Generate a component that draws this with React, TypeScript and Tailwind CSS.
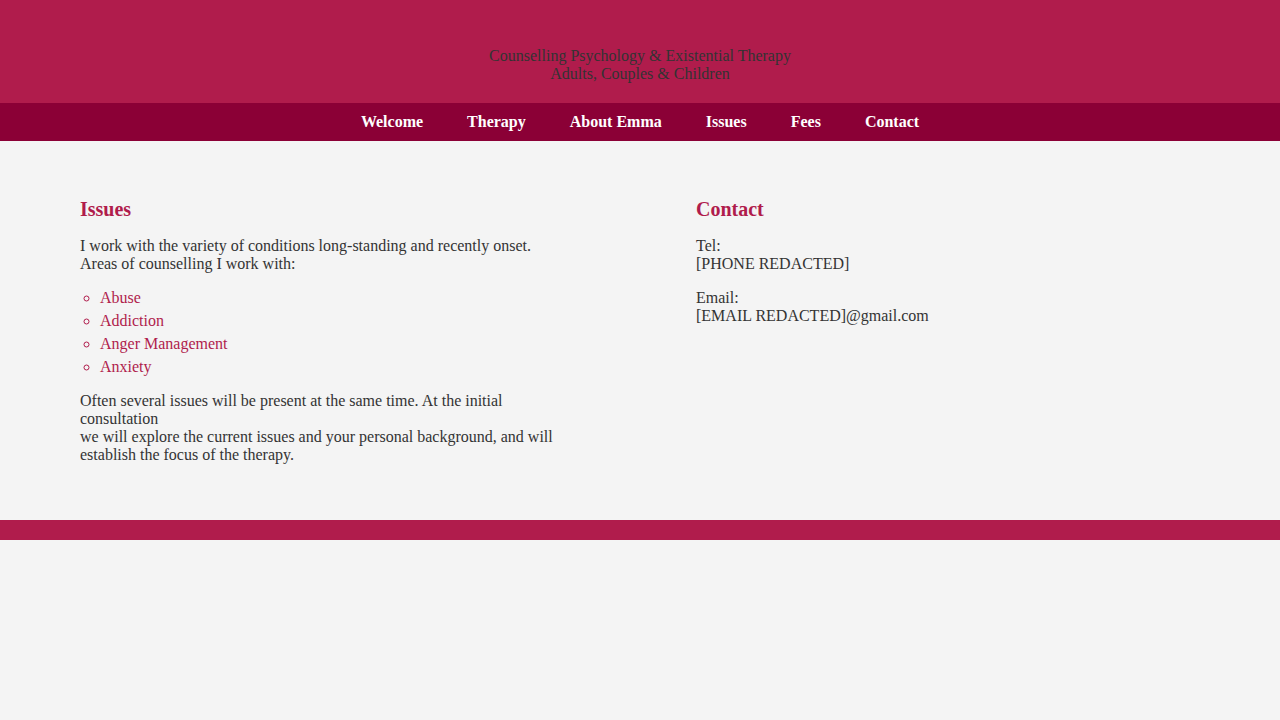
export default function App() {
  const navItems = ["Welcome", "Therapy", "About Emma", "Issues", "Fees", "Contact"];
  const issues = ["Abuse", "Addiction", "Anger Management", "Anxiety"];

  return (
    <div className="min-h-screen bg-[#f4f4f4] text-[#333333] font-['Liberation_Serif','Times_New_Roman',serif] text-[16px] leading-[18px]">
      {/* Header */}
      <header className="bg-[#b01c4c] pt-[47px] pb-[20px] text-center">
        <div>Counselling Psychology &amp; Existential Therapy</div>
        <div>Adults, Couples &amp; Children</div>
      </header>

      {/* Nav */}
      <nav className="bg-[#8b0036] h-[38px] flex items-center justify-center">
        {navItems.map((item) => (
          <a key={item} href="#" className="px-[22px] text-white font-bold">
            {item}
          </a>
        ))}
      </nav>

      {/* Main */}
      <main className="px-[80px] pt-[57px] pb-[56px] grid grid-cols-2 gap-x-[112px]">
        <section>
          <h2 className="text-[20px] leading-[23px] font-bold text-[#b01c4c] mb-[16px]">Issues</h2>
          <p className="mb-[16px]">
            I work with the variety of conditions long-standing and recently onset.
            <br />
            Areas of counselling I work with:
          </p>
          <ul className="list-[circle] pl-[20px] mb-[16px] text-[#b01c4c]">
            {issues.map((issue, i) => (
              <li key={issue} className={i < issues.length - 1 ? "mb-[5px]" : ""}>
                {issue}
              </li>
            ))}
          </ul>
          <p>
            Often several issues will be present at the same time. At the initial consultation
            <br />
            we will explore the current issues and your personal background, and will establish the focus of the therapy.
          </p>
        </section>

        <section>
          <h2 className="text-[20px] leading-[23px] font-bold text-[#b01c4c] mb-[16px]">Contact</h2>
          <p className="mb-[16px]">
            Tel:
            <br />
            [PHONE REDACTED]
          </p>
          <p>
            Email:
            <br />
            [EMAIL REDACTED]@gmail.com
          </p>
        </section>
      </main>

      {/* Footer */}
      <footer className="bg-[#b01c4c] h-[20px]" />
    </div>
  );
}
